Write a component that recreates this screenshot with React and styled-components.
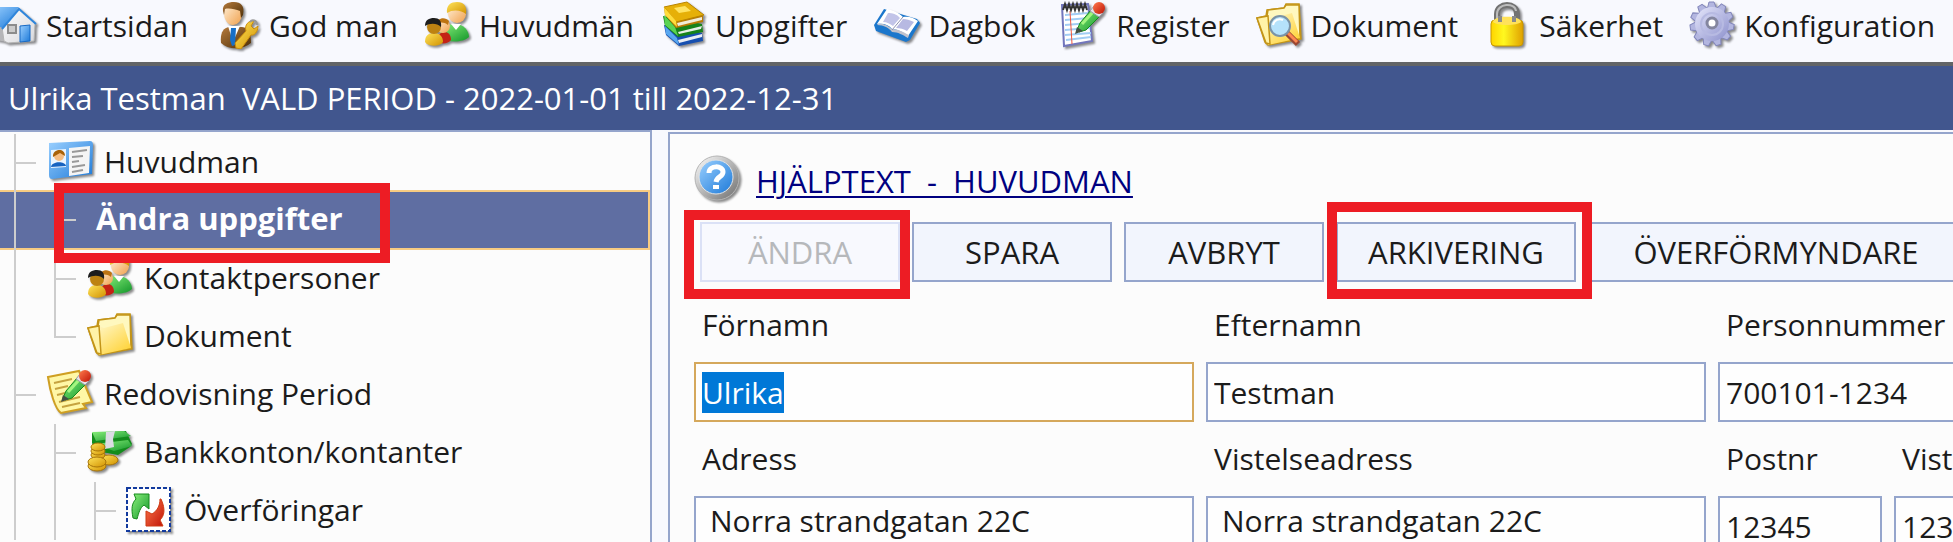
import React, { useEffect, useRef } from 'react'
import styled, { createGlobalStyle, css } from 'styled-components'

const GlobalStyle = createGlobalStyle`
  * { box-sizing: border-box; }
  body {
    margin: 0;
    overflow: hidden;
    background: #f8f9fe;
    color: #1b1b1b;
    font-family: 'Open Sans', 'Noto Sans', sans-serif;
    font-size: 30px;
  }
  button, input, textarea { font: inherit; color: inherit; }
`

const Page = styled.div`
  display: flex;
  flex-direction: column;
  height: 100vh;
  overflow: hidden;
`

const Nav = styled.nav`
  display: flex;
  flex: none;
  gap: 25px;
  height: 66px;
  padding-top: 1px;
  margin-left: -10px;
  border-bottom: 4px double #666;
  border-image: linear-gradient(#969b9d 50%, #626466 50%) 4;
`

const NavLink = styled.a`
  display: flex;
  flex: none;
  align-items: center;
  gap: 8px;
  height: 48px;
  color: inherit;
  text-decoration: none;
  white-space: nowrap;
`

const PeriodBar = styled.header`
  flex: none;
  height: 64px;
  padding-left: 8px;
  line-height: 64px;
  background: #41568e;
  color: #fff;
  font-size: 31px;
  white-space: nowrap;
`

const Main = styled.main`
  display: flex;
  flex: 1;
  gap: 16px;
  min-height: 0;
`

const TreePanel = styled.aside`
  flex: none;
  width: 652px;
  border: solid #95a5cc;
  border-width: 2px 2px 0 0;
  background: #fcfcfc;
`

const Tree = styled.ul`
  margin: 0;
  padding: 2px 0 0;
  list-style: none;
`

const TreeRow = styled.li`
  position: relative;
  display: flex;
  align-items: center;
  height: 58px;
  padding-left: 14px;
  ${p => p.$selected && css`
    z-index: 1;
    height: 60px;
    margin-top: -2px;
    background: #5f6ea2;
    box-shadow: inset 0 2px #f7cb82, inset 0 -2px #f7cb82, inset -2px 0 #f7cb82;
    color: #fff;
    font-size: 31px;
    font-weight: 700;
  `}
`

const TreeLink = styled.a`
  display: flex;
  align-items: center;
  gap: 10px;
  padding: 0 0 4px ${p => (p.$plain ? '10px' : '0')};
  color: inherit;
  text-decoration: none;
  white-space: nowrap;
`

const vertical = 'linear-gradient(#cdcdcd, #cdcdcd) 0 0 / 2px'
const horizontal = 'linear-gradient(#cdcdcd, #cdcdcd) 0 50% / 22px 2px no-repeat'

const guides = {
  pass: `${vertical} 100% no-repeat`,
  tee: `${vertical} 100% no-repeat, ${horizontal}`,
  end: `${vertical} 50% no-repeat, ${horizontal}`,
}

const Guide = styled.span`
  flex: none;
  align-self: stretch;
  width: ${p => (p.$last ? '32px' : '40px')};
  background: ${p => guides[p.$kind]};
`

const Marker = styled.span`
  position: absolute;
  z-index: 2;
  border: 10px solid #ed1c24;
  pointer-events: none;
  inset: ${p => p.$inset};
`

const FormPanel = styled.section`
  flex: 1;
  min-width: 0;
  margin-top: 2px;
  padding: 20px 0 0 24px;
  border: solid #95a5cc;
  border-width: 2px 0 0 2px;
  background: #fcfcfc;
  overflow: hidden;
`

const HelpLink = styled.a`
  display: flex;
  align-items: center;
  gap: 14px;
  height: 50px;
  color: #000080;
  font-size: 31px;
  text-decoration: none;
  white-space: pre;
  span {
    padding-top: 4px;
    text-decoration: underline;
    text-decoration-thickness: 2px;
    text-underline-offset: 3px;
  }
`

const Toolbar = styled.div`
  display: flex;
  gap: 12px;
  margin: 18px 0 6px;
  padding-left: 6px;
`

const ToolSlot = styled.div`
  position: relative;
  flex: none;
  width: ${p => p.$width};
  z-index: ${p => (p.$marked ? 1 : 0)};
`

const ToolButton = styled.button`
  width: 100%;
  height: 60px;
  padding: 0;
  border: 2px solid #95a5cc;
  background: #f2f5fd;
  white-space: nowrap;
  && { font-size: 31px; }
  &:disabled {
    border-color: #dbe1f6;
    background: #f8f9fe;
    color: #b6b8bb;
  }
`

const Fields = styled.form`
  display: grid;
  grid-template-columns: 500px 500px 164px 324px;
  column-gap: 12px;
`

const Field = styled.div`
  display: flex;
  flex-direction: column;
  grid-column: span ${p => p.$span || 1};
  label {
    padding-left: 8px;
    line-height: 74px;
    white-space: nowrap;
  }
`

const fieldBox = css`
  width: 100%;
  border: 2px solid #95a5cc;
  border-radius: 0;
  outline: none;
  background: #fefefe;
  &::selection {
    background: #0078d7;
    color: #fff;
  }
`

const Input = styled.input`
  ${fieldBox}
  height: 60px;
  padding: 0 6px;
  &:focus { border-color: #d5a85c; }
`

const TextArea = styled.textarea`
  ${fieldBox}
  height: 120px;
  padding: 3px 14px;
  line-height: 40px;
  resize: none;
`

const IconSvg = styled.svg`
  flex: none;
  width: 48px;
  height: 48px;
  filter: drop-shadow(2px 2px 1px rgba(0, 0, 0, 0.45));
`

function Icon({ children }) {
  return <IconSvg viewBox="0 0 48 48" aria-hidden="true">{children}</IconSvg>
}

const GradientSvg = styled.svg`
  display: block;
`

// gradients shared by all icons
function Gradients() {
  const list = {
    skin: ['#fff0d8', '#f0a04c'],
    blue: ['#9bd0ff', '#1c79d8'],
    gold: ['#ffe45c', '#d29200'],
    pale: ['#fffde0', '#ffcf28'],
    green: ['#8cf07c', '#12962a'],
    red: ['#ff7b4c', '#c01408'],
    steel: ['#ffffff', '#6c6c6c'],
    brown: ['#b57a3c', '#4d2f08'],
    violet: ['#e6e7fb', '#8c90cc'],
    white: ['#ffffff', '#d8d8dc'],
  }
  return (
    <GradientSvg width="0" height="0" aria-hidden="true">
      <defs>
        {Object.entries(list).map(([id, [from, to]]) => (
          <linearGradient key={id} id={id} x1="0" y1="0" x2="1" y2="1">
            <stop offset="0" stopColor={from} />
            <stop offset="1" stopColor={to} />
          </linearGradient>
        ))}
        <linearGradient id="lockBody">
          <stop offset="0" stopColor="#ffd400" />
          <stop offset="0.4" stopColor="#fff820" />
          <stop offset="1" stopColor="#e0a000" />
        </linearGradient>
      </defs>
    </GradientSvg>
  )
}

const HomeIcon = () => (
  <Icon>
    <path d="M2 20L14 26L22 42L6 39Z" fill="#b5b5b8" />
    <path d="M12 26L29 7L45 23L44 40L18 42L14 40Z" fill="url(#white)" stroke="#b4b4b4" />
    <path d="M9 6L29 6L13 27L0 23Z" fill="url(#blue)" />
    <path d="M12 28L29 8L46 23" fill="none" stroke="#2f86dc" strokeWidth="2" />
    <rect x="18" y="24" width="8" height="8" fill="#ccc" stroke="#8c8c8c" strokeWidth="2" />
    <path d="M30 25L40 24V40L30 41Z" fill="url(#blue)" stroke="#1668c4" />
  </Icon>
)

const PencilShape = () => (
  <g>
    <path d="M17 29L20 22L31 9L40 15L26 29L19 31Z" fill="url(#green)" stroke="#168a1c" />
    <path d="M22 23L33 11" stroke="#a4f580" strokeWidth="3" />
    <path d="M15 33L17 26L23 30Z" fill="#445044" />
    <path d="M30 10L34 5L43 12L39 16Z" fill="#e4e4ea" stroke="#9a9aa4" />
    <circle cx="39" cy="7" r="6" fill="url(#red)" />
  </g>
)

const AgentIcon = () => (
  <Icon>
    <path d="M8 42C7 32 10 27 16 26H29C36 27 38 31 38 42C30 49 15 49 8 42Z" fill="url(#brown)" />
    <path d="M15 25L20 41L27 25Z" fill="#fff" />
    <path d="M18 27L23 27L22 44L19 45L17 39Z" fill="#176fc8" />
    <ellipse cx="20" cy="13" rx="9" ry="11" fill="url(#skin)" />
    <path d="M10 10C9 3 15 1 21 1C28 1 32 5 30 14L28 17L27 10C22 8 16 7 12 8L11 14Z" fill="url(#brown)" />
    <path d="M22 42L33 30C31 24 36 19 41 20L38 25L41 28L45 25C45 31 41 35 38 34L28 48L23 47Z" fill="url(#gold)" stroke="#c98c0c" />
    <path d="M37 21C39 18 44 19 44 24" fill="none" stroke="#999" strokeWidth="2" />
  </Icon>
)

const UsersIcon = () => (
  <Icon>
    <path d="M17 36C17 26 23 23 32 23C41 23 46 30 46 36C40 42 24 42 17 36Z" fill="url(#green)" />
    <path d="M28 23L33 29L38 23Z" fill="#fff" />
    <circle cx="34" cy="13" r="9" fill="url(#skin)" />
    <path d="M24 12C23 4 28 1 34 1C41 1 44 5 43 13C38 9 30 8 24 12Z" fill="url(#gold)" />
    <path d="M14 39C15 33 18 31 22 31C26 31 28 35 28 39C25 43 17 44 14 39Z" fill="#c42315" />
    <circle cx="20" cy="25" r="7" fill="url(#skin)" />
    <path d="M13 23C14 17 22 15 26 20L25 24C21 21 17 21 13 23Z" fill="#bd7412" />
    <path d="M2 41C2 35 5 32 11 32C17 32 20 36 20 41C17 46 5 46 2 41Z" fill="url(#gold)" />
    <circle cx="11" cy="26" r="7" fill="#bd8212" />
    <path d="M2 25C2 19 6 17 11 17C16 17 19 20 18 26C14 22 7 22 2 25Z" fill="#1d1d1d" />
  </Icon>
)

const BooksIcon = () => (
  <Icon>
    <path d="M5 24L7 34L20 45L44 40L43 32Z" fill="#164fb0" />
    <path d="M19 39L43 33L43 36L20 42Z" fill="#e9edf4" />
    <path d="M4 15L6 25L19 36L44 31L43 23Z" fill="#16821a" />
    <path d="M19 31L43 25L42 28L20 33Z" fill="#e6eee6" />
    <path d="M5 14L16 26L19 35L6 24Z" fill="#5bd452" />
    <path d="M5 6L6 14L17 27L44 21L44 15Z" fill="#b77b05" />
    <path d="M18 22L43 16L43 19L19 25Z" fill="#f1ecd9" />
    <path d="M5 6L28 1L45 14L17 21Z" fill="#e6b008" stroke="#b88300" />
    <path d="M5 6L17 20L18 26L6 14Z" fill="#ffdc3c" />
    <path d="M15 7L26 5L32 10L20 12Z" fill="#ffe362" />
    <path d="M6 25L18 37L20 44L7 33Z" fill="#58a7f0" />
  </Icon>
)

const DiaryIcon = () => (
  <Icon>
    <path d="M12 8L2 24L4 30L34 41L38 39L48 22L45 18Z" fill="#1c77cc" />
    <path d="M15 8L5 23C12 22 17 24 20 28C25 28 31 31 36 35L46 20C41 16 36 15 31 16C26 11 20 9 15 8Z" fill="#fff" />
    <path d="M5 24C12 24 17 27 20 31C26 31 31 34 36 37L37 34C31 31 26 28 20 28C16 25 12 22 6 23Z" fill="#bfc1cc" />
    <path d="M16 12L11 21C15 21 18 23 21 25L28 17C25 13 20 12 16 12Z" fill="#c2c4e8" />
    <path d="M31 18L24 27C28 27 32 28 35 30L42 21C38 19 34 18 31 18Z" fill="#b7b9e2" />
    <path d="M31 16L20 29" stroke="#8d8fae" />
  </Icon>
)

const RegisterIcon = () => (
  <Icon>
    <path d="M2 4L28 3L32 40L4 45Z" fill="#fff" stroke="#7276bc" strokeWidth="2" />
    <path d="M5 14L28 12M5 19L29 17M5 24L30 22M5 29L30 27M5 34L31 32M6 39L31 36" stroke="#a2cdf4" strokeWidth="2" />
    <path d="M10 10L12 43" stroke="#f0553c" />
    <path d="M3 9L5 3L7 9L9 3L11 9L13 3L15 9L17 3L19 9L21 3L23 9L25 3L27 9" fill="none" stroke="#333" strokeWidth="2" />
    <PencilShape />
  </Icon>
)

const FolderShape = () => (
  <g stroke="#c39417" strokeWidth="1.5">
    <path d="M2 17L11 15L12 9L29 7L31 3L44 3L46 38L13 44L10 41Z" fill="url(#pale)" />
    <path d="M12 15L13 9L29 7L31 4L44 4L45 37L14 43Z" fill="#fff8bf" />
    <path d="M2 17L13 15L18 17L37 12L45 37L13 44Z" fill="url(#pale)" stroke="none" />
    <path d="M2 17L13 15L15 43L11 42Z" fill="#fff3a8" />
  </g>
)

const FolderIcon = () => <Icon><FolderShape /></Icon>

const FindIcon = () => (
  <Icon>
    <FolderShape />
    <path d="M32 32L43 43" stroke="#9a4632" strokeWidth="6" />
    <path d="M33 32L42 41" stroke="#ff8750" strokeWidth="3" />
    <circle cx="25" cy="25" r="10" fill="#b5e2fb" stroke="#7b93a6" strokeWidth="2" />
    <path d="M18 24C19 19 24 17 28 19" fill="none" stroke="#fff" strokeWidth="2" />
  </Icon>
)

const LockIcon = () => (
  <Icon>
    <path d="M14 24V13C14 1 34 1 34 13V24" fill="none" stroke="#727272" strokeWidth="6" />
    <path d="M14 24V13C14 2 32 1 33 10" fill="none" stroke="#bcbcbc" strokeWidth="2" />
    <rect x="8" y="19" width="32" height="26" rx="4" fill="url(#lockBody)" stroke="#c79700" />
    <path d="M10 21C10 14 38 14 38 21C34 25 14 25 10 21Z" fill="#ffe25a" />
    <path d="M17 21V15M31 21V15" stroke="#8a8a8a" strokeWidth="4" />
  </Icon>
)

const GearIcon = () => (
  <Icon>
    <g fill="#b3b6e0" stroke="#8286bb">
      {[0, 33, 66, 99, 131, 164, 197, 229, 262, 295, 328].map(a => (
        <path key={a} d="M19 9L21 1L26 1L29 9Z" transform={`rotate(${a} 24 23)`} />
      ))}
    </g>
    <circle cx="24" cy="23" r="17" fill="url(#violet)" />
    <circle cx="24" cy="23" r="11" fill="none" stroke="#b7bae2" strokeWidth="2" />
    <circle cx="24" cy="22" r="5" fill="#fff" stroke="#84869f" strokeWidth="3" />
  </Icon>
)

const CardIcon = () => (
  <Icon>
    <path d="M3 6L44 4Q47 4 47 8L46 37L6 42Q3 42 3 38Z" fill="url(#blue)" />
    <path d="M23 11L44 9L43 36L23 39Z" fill="#f5f5f5" />
    <path d="M26 15L41 13M26 20L37 19M26 25L33 24M26 30L39 28M26 35L37 33" stroke="#999" strokeWidth="2" />
    <path d="M5 13L20 12V30L5 31Z" fill="#eaf5ff" />
    <path d="M5 30C6 24 19 24 20 29Z" fill="#1763c0" />
    <circle cx="13" cy="19" r="5" fill="#f6bd82" />
    <path d="M7 20C6 12 19 10 19 19L14 16Z" fill="#a96208" />
  </Icon>
)

const NoteIcon = () => (
  <Icon>
    <path d="M2 8L33 2L46 33L37 35L40 39L15 44C9 40 4 22 2 8Z" fill="#fff7a6" stroke="#cf9f22" strokeWidth="2" />
    <path d="M8 14L26 10M9 20L22 17M11 26L19 24M13 33L34 28M16 38L34 34" stroke="#c6a340" strokeWidth="2" />
    <PencilShape />
  </Icon>
)

const MoneyIcon = () => (
  <Icon>
    <path d="M6 6L40 4L46 17L44 20L32 28L10 24L6 16Z" fill="#138c1c" />
    <path d="M6 5L38 4L45 9L10 14Z" fill="url(#green)" />
    <path d="M9 17L42 13L46 19L28 24Z" fill="url(#green)" />
    <path d="M20 5L29 4L27 12L28 20L19 22Z" fill="#dcdce4" />
    <g fill="url(#gold)" stroke="#a77408">
      <ellipse cx="23" cy="33" rx="9" ry="5" />
      <ellipse cx="12" cy="28" rx="7" ry="4" />
      <ellipse cx="12" cy="24" rx="7" ry="4" />
      <ellipse cx="12" cy="20" rx="7" ry="4" />
      <ellipse cx="11" cy="39" rx="9" ry="5" />
      <ellipse cx="11" cy="35" rx="9" ry="5" />
    </g>
  </Icon>
)

const TransferIcon = () => (
  <Icon>
    <rect x="1" y="3" width="43" height="43" fill="#fff" stroke="#123a9e" strokeWidth="2" strokeDasharray="4 2" />
    <path d="M7 33C5 23 6 18 10 14L8 9H23V24L18 20C14 23 13 27 11 34Z" fill="url(#green)" stroke="#168a1c" />
    <path d="M35 14C40 25 38 31 34 35L37 41H20V26L26 29C31 26 34 21 34 14Z" fill="url(#red)" stroke="#ce3b15" />
  </Icon>
)

const HelpIcon = () => (
  <Icon>
    <circle cx="23" cy="23" r="22" fill="url(#steel)" stroke="#b4b4b4" />
    <circle cx="22" cy="22" r="17" fill="url(#blue)" stroke="#e4e4e4" />
    <path d="M15 18C15 10 29 10 29 17C29 22 23 21 22 27" fill="none" stroke="#fff" strokeWidth="5" />
    <rect x="19" y="30" width="6" height="4" fill="#fff" />
  </Icon>
)

const menu = [
  ['Startsidan', HomeIcon],
  ['God man', AgentIcon],
  ['Huvudmän', UsersIcon],
  ['Uppgifter', BooksIcon],
  ['Dagbok', DiaryIcon],
  ['Register', RegisterIcon],
  ['Dokument', FindIcon],
  ['Säkerhet', LockIcon],
  ['Konfiguration', GearIcon],
]

const tree = [
  { title: 'Huvudman', icon: CardIcon, lines: ['tee'] },
  { title: 'Ändra uppgifter', lines: ['pass', 'tee'], selected: true },
  { title: 'Kontaktpersoner', icon: UsersIcon, lines: ['pass', 'tee'] },
  { title: 'Dokument', icon: FolderIcon, lines: ['pass', 'end'] },
  { title: 'Redovisning Period', icon: NoteIcon, lines: ['tee'] },
  { title: 'Bankkonton/kontanter', icon: MoneyIcon, lines: ['pass', 'tee'] },
  { title: 'Överföringar', icon: TransferIcon, lines: ['pass', 'pass', 'tee'] },
]

const tools = [
  { title: 'ÄNDRA', width: '200px', disabled: true, marker: '-12px -10px -17px -16px' },
  { title: 'SPARA', width: '200px' },
  { title: 'AVBRYT', width: '200px' },
  { title: 'ARKIVERING', width: '240px', marker: '-20px -16px -17px -9px' },
  { title: 'ÖVERFÖRMYNDARE', width: '376px' },
]

export default function App() {
  const firstName = useRef(null)

  useEffect(() => {
    firstName.current.focus()
    firstName.current.select()
  }, [])

  return (
    <Page>
      <GlobalStyle />
      <Gradients />
      <Nav>
        {menu.map(([title, MenuIcon]) => (
          <NavLink key={title} href="#"><MenuIcon />{title}</NavLink>
        ))}
      </Nav>
      <PeriodBar>Ulrika Testman&nbsp; VALD PERIOD - 2022-01-01 till 2022-12-31</PeriodBar>
      <Main>
        <TreePanel>
          <Tree>
            {tree.map(({ title, icon: RowIcon, lines, selected }) => (
              <TreeRow key={title} $selected={selected}>
                {lines.map((kind, i) => (
                  <Guide key={i} $kind={kind} $last={i === lines.length - 1} />
                ))}
                <TreeLink href="#" $plain={!RowIcon}>
                  {RowIcon && <RowIcon />}
                  {title}
                </TreeLink>
                {selected && <Marker $inset="-7px 260px -13px 54px" />}
              </TreeRow>
            ))}
          </Tree>
        </TreePanel>
        <FormPanel>
          <HelpLink href="#"><HelpIcon /><span>{'HJÄLPTEXT  -  HUVUDMAN'}</span></HelpLink>
          <Toolbar>
            {tools.map(({ title, width, disabled, marker }) => (
              <ToolSlot key={title} $width={width} $marked={!!marker}>
                <ToolButton type="button" disabled={disabled}>{title}</ToolButton>
                {marker && <Marker $inset={marker} />}
              </ToolSlot>
            ))}
          </Toolbar>
          <Fields>
            <Field>
              <label htmlFor="fornamn">Förnamn</label>
              <Input id="fornamn" ref={firstName} defaultValue="Ulrika" />
            </Field>
            <Field>
              <label htmlFor="efternamn">Efternamn</label>
              <Input id="efternamn" defaultValue="Testman" />
            </Field>
            <Field $span={2}>
              <label htmlFor="personnummer">Personnummer</label>
              <Input id="personnummer" defaultValue="700101-1234" />
            </Field>
            <Field>
              <label htmlFor="adress">Adress</label>
              <TextArea id="adress" defaultValue="Norra strandgatan 22C" />
            </Field>
            <Field>
              <label htmlFor="vistelseadress">Vistelseadress</label>
              <TextArea id="vistelseadress" defaultValue="Norra strandgatan 22C" />
            </Field>
            <Field>
              <label htmlFor="postnr">Postnr</label>
              <Input id="postnr" defaultValue="12345" />
            </Field>
            <Field>
              <label htmlFor="vist">Vist</label>
              <Input id="vist" defaultValue="123" />
            </Field>
          </Fields>
        </FormPanel>
      </Main>
    </Page>
  )
}
